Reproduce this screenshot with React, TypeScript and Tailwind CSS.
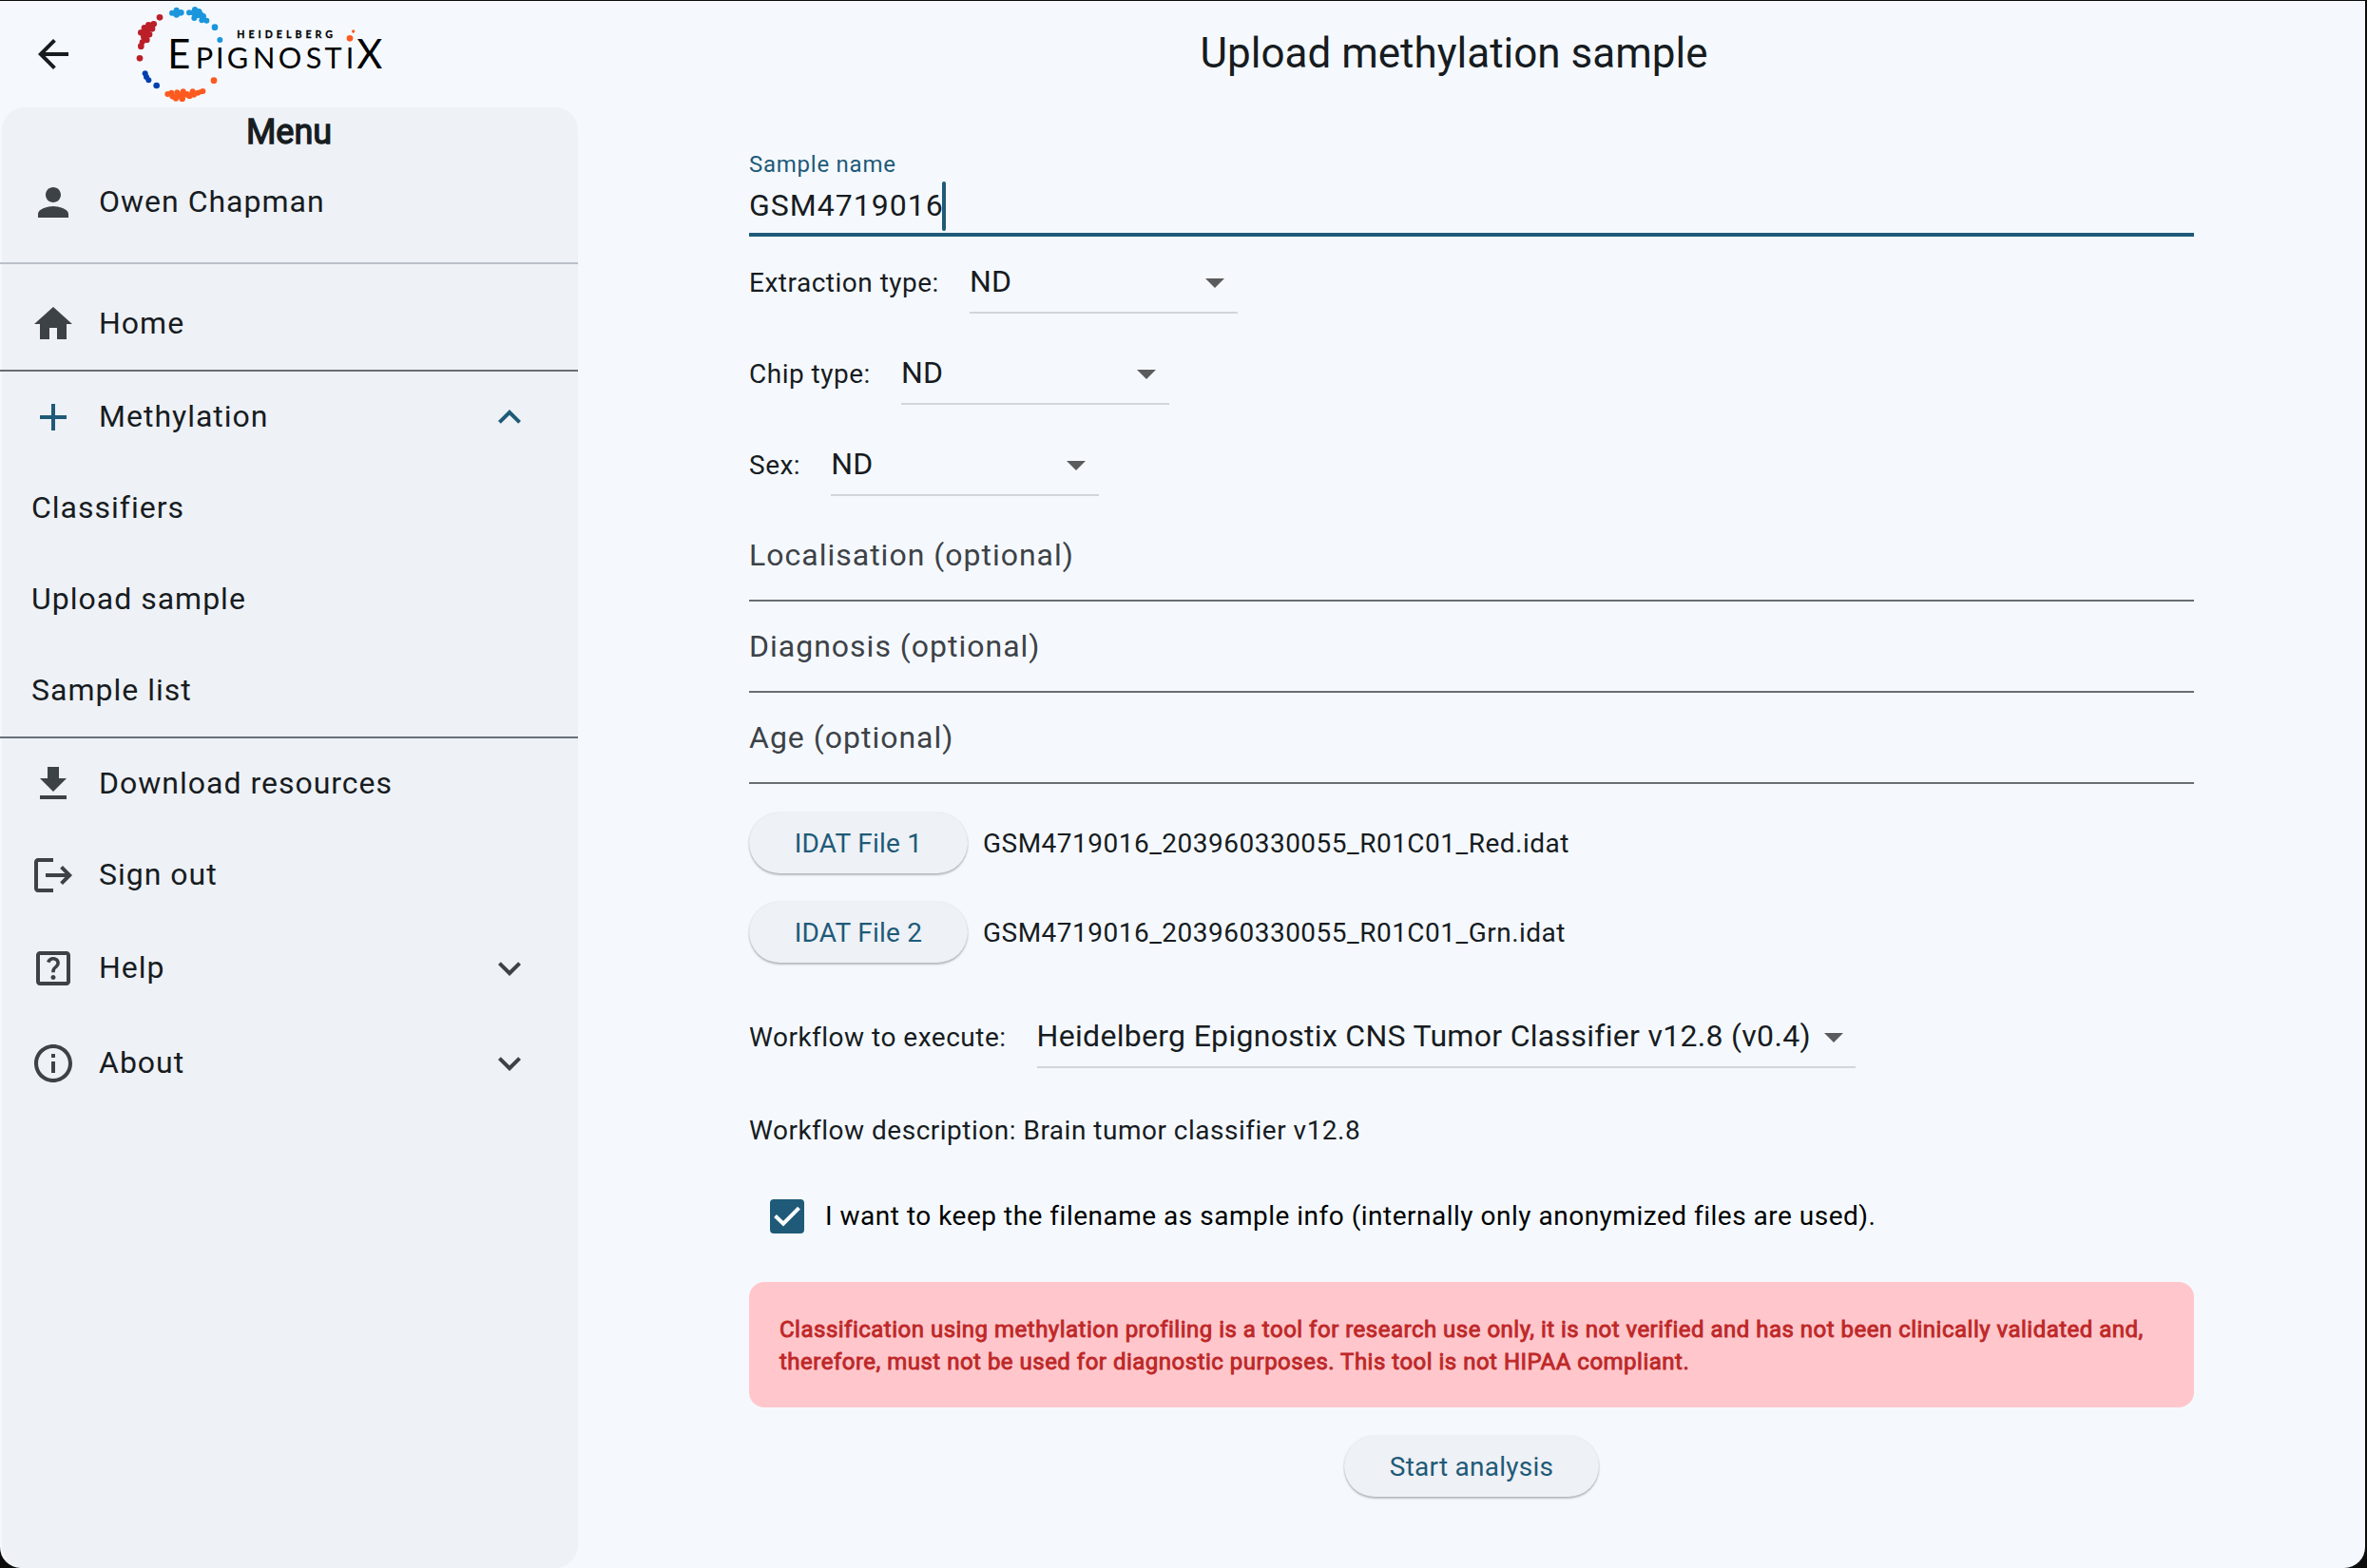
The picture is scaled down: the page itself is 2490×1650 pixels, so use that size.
import type { ReactNode } from "react";
import {
  MdAdd,
  MdArrowBack,
  MdArrowDropDown,
  MdExpandLess,
  MdExpandMore,
  MdHome,
  MdInfoOutline,
  MdOutlineHelpCenter,
  MdPerson,
} from "react-icons/md";

type Dot = [number, number, number];

const DOTS: { fill: string; dots: Dot[] }[] = [
  {
    fill: "#1b96dc",
    dots: [
      [543, 41, 9], [557, 32, 9], [557, 41, 12], [571, 40, 10], [557, 47, 9],
      [597, 40, 9], [609, 40, 9], [615, 30, 9], [614, 43, 10], [627, 38, 11], [613, 57, 9],
      [623, 49, 9], [633, 47, 10], [641, 52, 10], [637, 64, 9], [652, 65, 9],
      [678, 86, 10], [694, 126, 9],
    ],
  },
  {
    fill: "#bb1f28",
    dots: [
      [504, 55, 10], [485, 76, 10], [469, 79, 10], [456, 88, 10], [480, 91, 10], [465, 92, 11],
      [445, 103, 10], [459, 104, 11], [471, 109, 10], [455, 116, 11], [463, 126, 10],
      [449, 133, 9], [445, 146, 10], [441, 184, 10],
    ],
  },
  { fill: "#0340ad", dots: [[458, 232, 9], [462, 243, 9], [469, 253, 9], [494, 270, 10]] },
  {
    fill: "#fd5a1f",
    dots: [
      [675, 254, 10], [529, 297, 9], [541, 293, 9], [545, 304, 10], [559, 292, 9], [555, 311, 9],
      [563, 302, 10], [578, 289, 9], [575, 299, 10], [575, 311, 10], [590, 298, 10], [598, 302, 10],
      [608, 289, 9], [612, 299, 9], [624, 293, 9], [633, 290, 8], [640, 288, 9],
      [1104, 121, 10], [1115, 99, 5],
    ],
  },
];

function Logo() {
  return (
    <svg viewBox="420 12 804 312" className="h-[104px] w-[268px] shrink-0" fill="#000">
      {DOTS.map((g) => (
        <g key={g.fill} fill={g.fill}>
          {g.dots.map(([x, y, r]) => (
            <circle key={`${x}-${y}`} cx={x} cy={y} r={r} />
          ))}
        </g>
      ))}
      <g className="font-['Lato',sans-serif]" textAnchor="middle">
        <text x="565 1166" y="217" fontSize="125">EX</text>
        <text x="645 694 750 833 915 990 1052 1104" y="217" fontSize="92">PIGNOSTI</text>
        <text x="748" y="120" fontSize="32" fontWeight="700" stroke="#000" strokeWidth="0.8" textAnchor="start" textLength="302">
          HEIDELBERG
        </text>
      </g>
    </svg>
  );
}

function DownloadIcon() {
  return (
    <svg viewBox="0 0 24 24" className="size-12" fill="currentColor">
      <path d="M19 9h-4V3H9v6H5l7 7 7-7zM5 18v2h14v-2H5z" />
    </svg>
  );
}

function LogoutIcon() {
  return (
    <svg viewBox="0 0 24 24" className="size-12" fill="currentColor">
      <path d="M17 7l-1.41 1.41L18.17 11H8v2h10.17l-2.58 2.58L17 17l5-5zM4 5h8V3H4c-1.1 0-2 .9-2 2v14c0 1.1.9 2 2 2h8v-2H4V5z" />
    </svg>
  );
}

function NavRow({ icon, label, trailing, tall }: { icon: ReactNode; label: string; trailing?: ReactNode; tall?: boolean }) {
  return (
    <div className={`flex items-center gap-6 pr-12 pl-[30px] text-[#3d4247] ${tall ? "h-[100px]" : "h-24"}`}>
      {icon}
      <span className="flex-1 pb-0.5 text-[32px] leading-10 tracking-[1px] text-[#171c1f]">{label}</span>
      {trailing}
    </div>
  );
}

function SubRow({ label }: { label: string }) {
  return (
    <div className="flex h-24 items-center pb-0.5 pl-[31px] text-[32px] leading-10 tracking-[1px]">{label}</div>
  );
}

function Sidebar() {
  return (
    <aside className="w-[608px] shrink-0 pl-0.5">
      <div className="h-full rounded-[24px] bg-[#eef1f6]">
        <div className="flex h-[52px] items-center justify-center pr-0.5 text-[36px] leading-[52px] [-webkit-text-stroke:1.3px_#171c1f]">
          Menu
        </div>
        <NavRow icon={<MdPerson className="size-12" />} label="Owen Chapman" />
        <div className="mt-[15px] -ml-0.5 h-0.5 bg-[#b9c0c7]" />
        <div className="mt-[15px]">
          <NavRow icon={<MdHome className="size-12" />} label="Home" />
        </div>
        <div className="-ml-0.5 h-0.5 bg-[#686e72]" />
        <NavRow
          icon={<MdAdd className="size-12 text-[#1f5a78]" />}
          label="Methylation"
          trailing={<MdExpandLess className="size-12 text-[#1f5a78]" />}
        />
        <SubRow label="Classifiers" />
        <SubRow label="Upload sample" />
        <SubRow label="Sample list" />
        <div className="-ml-0.5 h-0.5 bg-[#687278]" />
        <NavRow icon={<DownloadIcon />} label="Download resources" />
        <NavRow icon={<LogoutIcon />} label="Sign out" />
        <NavRow tall icon={<MdOutlineHelpCenter className="size-12" />} label="Help" trailing={<MdExpandMore className="size-12" />} />
        <NavRow tall icon={<MdInfoOutline className="size-12" />} label="About" trailing={<MdExpandMore className="size-12" />} />
      </div>
    </aside>
  );
}

function SelectRow({ label, value, wide }: { label: string; value: string; wide?: boolean }) {
  return (
    <div className="flex h-24 items-center gap-8">
      <span className="pt-px text-[28px] leading-10 tracking-[0.5px]">{label}</span>
      <div
        className={`flex h-[66px] items-center border-b-2 border-[#d3d6d8] pt-0.5 ${wide ? "w-[861px]" : "w-[282px]"}`}
      >
        <span className="flex-1 pb-0.5 text-[32px] leading-10 tracking-[0.3px] whitespace-nowrap">{value}</span>
        <MdArrowDropDown className="size-12 shrink-0 text-[#5a5b5c]" />
      </div>
    </div>
  );
}

function OptionalField({ label }: { label: string }) {
  return (
    <div className="flex h-24 items-center border-b-2 border-[#686f74] text-[32px] leading-10 tracking-[1px] text-[#3d4247]">
      {label}
    </div>
  );
}

function PillButton({ children, width }: { children: ReactNode; width: string }) {
  return (
    <button
      className={`${width} flex h-16 shrink-0 items-center justify-center rounded-full bg-[#eef1f6] pt-0.5 text-[28px] leading-10 tracking-[0.25px] text-[#1f5a78] shadow-[0_2px_2px_rgba(0,0,0,0.24),0_0_2px_rgba(0,0,0,0.12)]`}
    >
      {children}
    </button>
  );
}

function FileRow({ button, file }: { button: string; file: string }) {
  return (
    <div className="mt-[30px] flex items-center gap-4">
      <PillButton width="w-[230px]">{button}</PillButton>
      <span className="pt-0.5 text-[28px] leading-10 tracking-[0.49px]">{file}</span>
    </div>
  );
}

function UploadForm() {
  return (
    <main className="flex w-[1700px] flex-col pl-[180px]">
      <div className="mt-10 flex h-24 flex-col border-b-4 border-[#1f5a78]">
        <span className="mt-1 text-[24px] leading-8 tracking-[0.75px] text-[#1f5a78]">Sample name</span>
        <div className="mt-0.5 flex items-center">
          <span className="pb-0.5 text-[32px] leading-10 tracking-[1px]">GSM4719016</span>
          <span className="-ml-0.5 h-[52px] w-1 rounded-full bg-[#1f5a78]" />
        </div>
      </div>
      <SelectRow label="Extraction type:" value="ND" />
      <SelectRow label="Chip type:" value="ND" />
      <SelectRow label="Sex:" value="ND" />
      <OptionalField label="Localisation (optional)" />
      <OptionalField label="Diagnosis (optional)" />
      <OptionalField label="Age (optional)" />
      <FileRow button="IDAT File 1" file="GSM4719016_203960330055_R01C01_Red.idat" />
      <FileRow button="IDAT File 2" file="GSM4719016_203960330055_R01C01_Grn.idat" />
      <div className="mt-[30px]">
        <SelectRow wide label="Workflow to execute:" value="Heidelberg Epignostix CNS Tumor Classifier v12.8 (v0.4)" />
      </div>
      <p className="mt-[31px] text-[28px] leading-10 tracking-[0.5px]">
        Workflow description: Brain tumor classifier v12.8
      </p>
      <label className="mt-[50px] flex h-10 items-center pl-[22px] text-[28px] leading-10 tracking-[0.5px] text-black">
        <span className="mr-[22px] flex size-9 items-center justify-center rounded-[4px] bg-[#1f5a78]">
          <svg viewBox="0 0 36 36" className="size-9" fill="none" stroke="#fff" strokeWidth="4">
            <path d="M5.5 17.5 14 25.6 30.5 9.2" />
          </svg>
        </span>
        I want to keep the filename as sample info (internally only anonymized files are used).
      </label>
      <div className="mt-[49px] rounded-2xl bg-[#ffc7cc] px-8 pt-[33px] pb-[31px] text-[24px] leading-[34px] tracking-[0.495px] whitespace-nowrap text-[#be2828] [-webkit-text-stroke:0.9px_#be2828]">
        Classification using methylation profiling is a tool for research use only, it is not verified and has not been clinically validated and,
        <br />
        therefore, must not be used for diagnostic purposes. This tool is not HIPAA compliant.
      </div>
      <div className="mt-[30px] flex justify-center">
        <PillButton width="w-[268px]">Start analysis</PillButton>
      </div>
    </main>
  );
}

export default function App() {
  return (
    <div className="h-[1650px] w-[2490px] overflow-hidden bg-[#0c0c0c] pt-px pr-0.5 font-['Roboto',sans-serif] text-[#171c1f]">
      <div className="flex h-[1649px] flex-col overflow-hidden rounded-b-[22px] bg-[#f5f9fe]">
        <header className="flex h-28 shrink-0 items-center pr-[37px]">
          <div className="flex h-28 w-[608px] shrink-0 items-center pl-8">
            <MdArrowBack className="size-12 text-[#171c1f]" />
            <div className="-mt-0.5 ml-[60px]">
              <Logo />
            </div>
          </div>
          <h1 className="flex-1 pb-0.5 text-center text-[44px] leading-[56px]">Upload methylation sample</h1>
        </header>
        <div className="flex min-h-0 flex-1">
          <Sidebar />
          <UploadForm />
        </div>
      </div>
    </div>
  );
}
